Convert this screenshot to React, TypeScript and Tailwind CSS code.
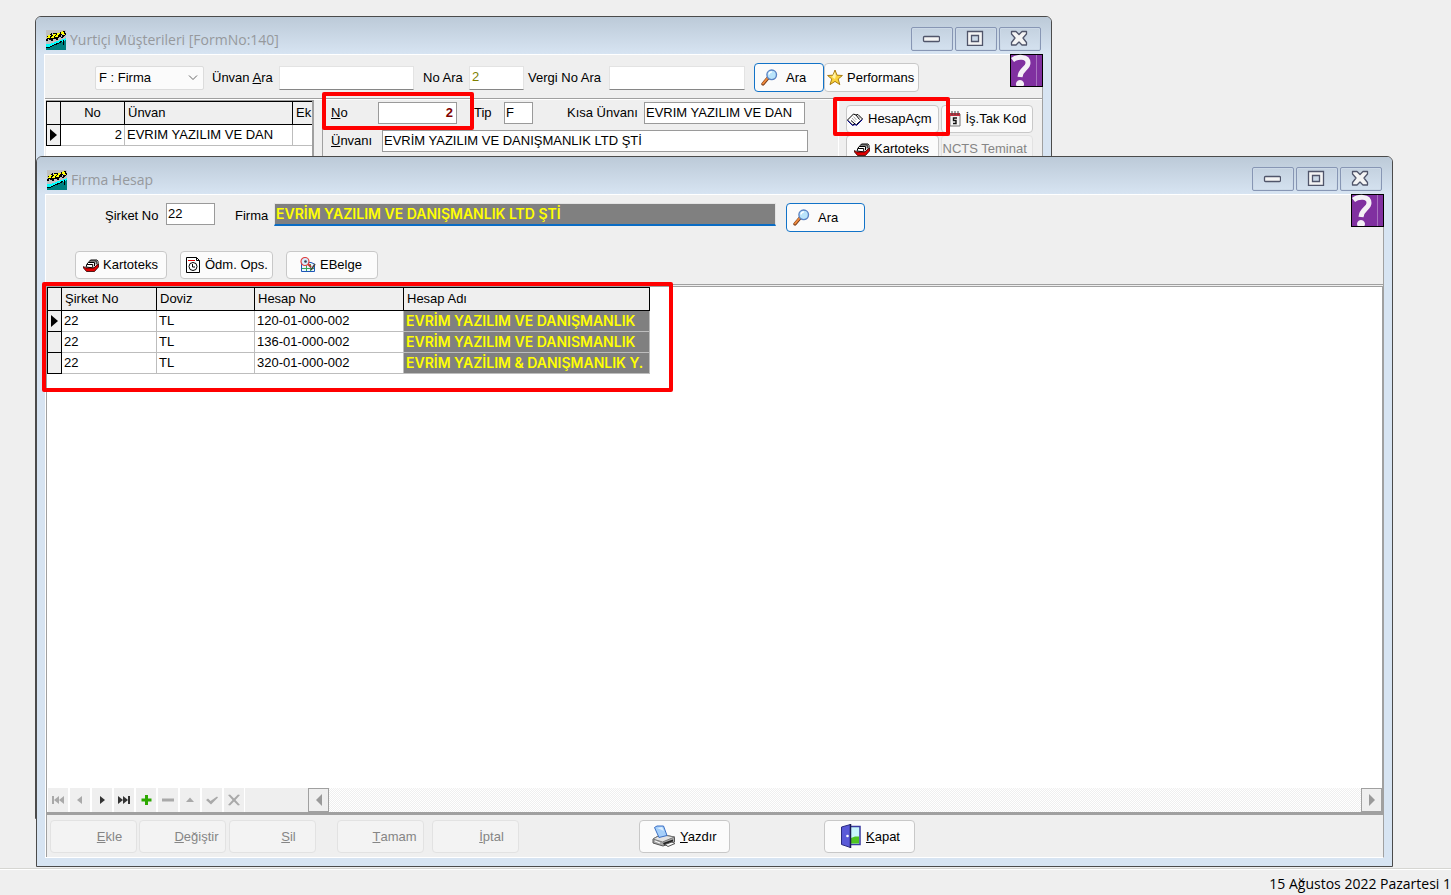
import type { ReactNode } from "react"

const accounts = [
  { firm: "22", currency: "TL", no: "120-01-000-002", name: "EVRİM YAZILIM VE DANIŞMANLIK" },
  { firm: "22", currency: "TL", no: "136-01-000-002", name: "EVRİM YAZILIM VE DANISMANLIK" },
  { firm: "22", currency: "TL", no: "320-01-000-002", name: "EVRİM YAZİLIM & DANIŞMANLIK Y." },
]

function AppIcon() {
  return (
    <svg width="20" height="20" viewBox="0 0 20 20" shapeRendering="crispEdges" className="shrink-0">
      <rect width="20" height="20" fill="#c0c0c0" />
      <path d="M0 17L6 15L12 13L20 9V20H0z" fill="#008080" />
      <path d="M0 14H4L9 12L14 10L20 8V10L14 13L9 14L4 17L0 18z" fill="#00ffff" />
      <path d="M1 11L2 7L5 5L4 9L6 10L8 4L10 4L9 8L11 9L13 3M14 7L15 3L18 2L19 4L17 6L16 8" fill="none" stroke="#000" strokeWidth="2" />
      <path d="M2 8L4 5M6 8L9 4M10 7L13 3M15 4L17 2M17 5L18 4" fill="none" stroke="#ff0" strokeWidth="2" />
      <path d="M0 18L4 17L8 15L13 13L16 11M17 10V14H18" fill="none" stroke="#000" />
    </svg>
  )
}

function SearchIcon() {
  return (
    <svg width="17" height="17" viewBox="0 0 17 17" className="shrink-0">
      <path d="M2 15L7 9" stroke="#7a3f1c" strokeWidth="3.4" strokeLinecap="round" />
      <path d="M2 14.6L6.6 9.2" stroke="#f08a3c" strokeWidth="1.8" strokeLinecap="round" />
      <circle cx="10.7" cy="5.8" r="4.8" fill="#b9e4fb" stroke="#5b84c4" strokeWidth="1.4" />
      <path d="M8 5.5a3 3 0 0 1 3-2.6" stroke="#fff" strokeWidth="1.4" fill="none" />
    </svg>
  )
}

function StarIcon() {
  return (
    <svg width="16" height="17" viewBox="0 0 16 17" className="shrink-0">
      <path d="M8 1L10 6.2L15.4 6.5L11.2 10L12.8 15.6L8 12.4L3 15.6L4.8 10L.6 6.5L6 6.2z" fill="#fbd33c" stroke="#a87b12" strokeLinejoin="round" />
      <path d="M8 3L8.8 7L8 10L5 8z" fill="#fff3a8" />
    </svg>
  )
}

function BookIcon() {
  return (
    <svg width="16" height="15" viewBox="0 0 16 15" className="shrink-0">
      <path d="M.5 8L6.500 2L9 3L11 2.500L15.500 7L9.500 12.500L7.500 12L5.500 13z" fill="#fff" stroke="#000" />
      <path d="M.5 8.500L5.500 13.500L8 12.500L9.500 13.500L15.500 7.500" stroke="#000090" fill="none" />
      <path d="M9 3L12.500 7.500M4 8.500L8 12" stroke="#000" fill="none" />
      <path d="M6.500 4.500L9.500 8M5 6L8.500 10M11.500 4.500L13 6.500" stroke="#aaa" fill="none" />
    </svg>
  )
}

function CardsIcon() {
  return (
    <svg width="16" height="13" viewBox="0 0 16 13" className="shrink-0">
      <path d="M3 8L4 5L7.500 1H14L15 2.500V6L11 9z" fill="#fff" stroke="#000" />
      <path d="M5.500 3.500H11.500V7M7 2H13.200V5.500M4 5.500H9.700V8" fill="none" stroke="#000" />
      <path d="M.5 7.500L3 9H10.500L15.500 5V8L11.500 12.500H3.500L.5 9z" fill="#e00000" stroke="#300000" strokeWidth=".8" />
    </svg>
  )
}

function CalendarIcon() {
  return (
    <svg width="14" height="16" viewBox="0 0 14 16" className="shrink-0">
      <path d="M2 3H12V15H2z" fill="#f4f4f4" stroke="#777" />
      <path d="M2 2H12V5H2z" fill="#c03040" />
      <path d="M4 0V4M7 0V4M10 0V4" stroke="#444" />
      <path d="M9 7H5.5V9.5H8V12.5H5" stroke="#111" strokeWidth="1.4" fill="none" />
    </svg>
  )
}

function ClockPageIcon() {
  return (
    <svg width="14" height="16" viewBox="0 0 14 16" className="shrink-0">
      <path d="M.5 .5H10.5L13.5 3.5V15.5H.5z" fill="#fff" stroke="#000" />
      <path d="M2 3.5H9" stroke="#e00000" />
      <path d="M10.5 .5V3.5H13.5" stroke="#000" fill="none" />
      <circle cx="7" cy="9.5" r="4" fill="#fff" stroke="#000" />
      <path d="M6.500 7V10H9" stroke="#000" fill="none" />
    </svg>
  )
}

function DocumentSearchIcon() {
  return (
    <svg width="16" height="16" viewBox="0 0 16 16" className="shrink-0">
      <path d="M1.500 5.500H11L14.500 7V14.500H1.500z" fill="#e8f6ff" stroke="#1d57b8" />
      <path d="M2 11.500H14M6.500 7V14M10.500 7V14" stroke="#3aa05a" />
      <path d="M15 7L11 13" stroke="#444" strokeWidth="1.5" fill="none" />
      <path d="M8 7L11 10" stroke="#b33" strokeWidth="2" />
      <circle cx="5" cy="4.5" r="4" fill="#d5ecff" stroke="#e04040" strokeWidth="1.2" />
      <circle cx="5.5" cy="4.5" r="1.3" fill="#345" />
    </svg>
  )
}

function PrinterIcon() {
  return (
    <svg width="24" height="23" viewBox="0 0 24 23" className="shrink-0">
      <path d="M1 14L9 9.500L22.500 12V17L11 21L1 18z" fill="#a8a8a8" stroke="#555" />
      <path d="M1 14L9 9.500L22.500 12L10.500 17z" fill="#e2e2e2" stroke="#777" />
      <path d="M2.500 2.500L5 1H11.500L15 10.500L7 12.500z" fill="#a5cffa" stroke="#3b6fc4" />
      <path d="M5 3L10 2L12 6z" fill="#dcefff" />
      <path d="M11 18L21 14.500V16.500L12 20z" fill="#222" />
      <path d="M13 19.500L20 17L23 18.500L16 21.500z" fill="#f8f8f8" stroke="#555" />
      <path d="M3 16L8 18" stroke="#fff" />
    </svg>
  )
}

function DoorIcon() {
  return (
    <svg width="20" height="24" viewBox="0 0 20 24" className="shrink-0">
      <path d="M9 2.5H19V20.5H9z" fill="#c8f6fb" stroke="#3a3aa0" strokeWidth="1.5" />
      <path d="M10 14L14 12.500H18V19.500H10z" fill="#4fc41e" />
      <path d="M.5 3L9.5 .5V23.5L.5 20.5z" fill="#5a5ad8" stroke="#2a2a80" />
      <path d="M9.5 0V24" stroke="#1b1b50" strokeWidth="1.5" />
      <circle cx="6.5" cy="12" r="1.3" fill="#fff" />
    </svg>
  )
}

function HelpButton() {
  return (
    <button aria-label="Yardım" className="z-10 -mt-px -mr-px shrink-0 self-start">
      <svg width="33" height="33" viewBox="0 0 33 33">
        <rect x=".5" y=".5" width="32" height="32" fill="#8030a0" stroke="#000" />
        <path d="M26.5 1V32" stroke="#a873c0" />
        <path d="M2.500 6C7 2.500 18 1.500 18 9C18 14.500 10.500 15 10 23" fill="none" stroke="#f4f0f6" strokeWidth="5" />
        <path d="M6.500 32A4 4 0 1 1 13.500 32z" fill="#f4f0f6" />
      </svg>
    </button>
  )
}

function CaptionButton({ label, children }: { label: string; children: ReactNode }) {
  return (
    <button aria-label={label} className="flex h-6 w-[42px] items-center justify-center rounded-xs border border-[#8796b4] pr-[2px] pb-[2px] shadow-[inset_0_0_0_1px_#ccd9e7]">
      <svg width="18" height="16" viewBox="0 0 18 16" fill="#f4f4f4" stroke="#50556a" strokeWidth="1.3">
        {children}
      </svg>
    </button>
  )
}

function TitleBar({ title }: { title: string }) {
  return (
    <div className="flex h-[37px] shrink-0 items-center bg-linear-to-b from-[#bccad8] to-[#d7e4f2] px-[10px] pt-2">
      <AppIcon />
      <h1 className="ml-1 flex-1 font-['Open_Sans',sans-serif] text-[14px] text-[#96999d]">{title}</h1>
      <div className="flex gap-[2px] pb-[2px]">
        <CaptionButton label="Simge durumuna küçült">
          <rect x="1.500" y="6.500" width="16" height="5" rx="1" />
        </CaptionButton>
        <CaptionButton label="Ekranı kapla">
          <path fillRule="evenodd" d="M1.500 1.500H16.500V15.300H1.500zM5.500 5.500V11.500H12.500V5.500z" />
        </CaptionButton>
        <CaptionButton label="Kapat">
          <path d="M1.500 1.500H6L9 4.500L12 1.500H16.500V4L13 8L16.500 12.500V15H12L9 12L6 15H1.500V12.500L5 8L1.500 4z" strokeLinejoin="round" />
        </CaptionButton>
      </div>
    </div>
  )
}

function Button({ className = "", disabled, children }: { className?: string; disabled?: boolean; children: ReactNode }) {
  return (
    <button
      disabled={disabled}
      className={"flex shrink-0 items-center rounded border border-[#c8c8c8] bg-[#fbfbfb] whitespace-nowrap disabled:border-[#e2e2e2] disabled:bg-[#f3f3f3] disabled:text-[#858585] " + className}
    >
      {children}
    </button>
  )
}

const headCell = "border-y border-r border-black bg-[#efefef] px-[3px] text-left font-normal whitespace-nowrap"
const bodyCell = "border-r border-b border-[#bdbdbd] px-[2px] whitespace-nowrap overflow-hidden"
const rowMark = "border-x border-b border-black bg-[#efefef]"
const sunken = "border border-[#9a9a9a] bg-white px-[1px] pb-[1px] outline-none"
const flat = "h-6 border border-[#e3e3e3] border-b-[#868686] bg-white px-[2px] pb-[2px] outline-none"

function Marker() {
  return (
    <svg width="7" height="12" viewBox="0 0 7 12" className="ml-[3px]">
      <path d="M0 0L7 6L0 12z" />
    </svg>
  )
}

function CustomersWindow() {
  return (
    <section className="absolute top-4 left-[35px] flex h-[803px] w-[1017px] flex-col overflow-hidden rounded-t-md border border-[#4b4b4b] bg-[#d7e4f2]">
      <TitleBar title="Yurtiçi Müşterileri [FormNo:140]" />
      <div className="mx-2 mb-2 flex flex-1 flex-col border-t border-r border-l border-t-white border-r-[#a0a0a0] border-l-white bg-[#efefef]">
        <div className="flex h-11 shrink-0 border-b border-[#a0a0a0] pl-[50px]">
          <div className="flex flex-1 items-center pt-[2px]">
            <select aria-label="Tür" className="mr-2 h-6 w-[109px] appearance-none rounded-xs border border-[#dcdcdc] bg-[#fbfbfb] px-[3px]">
              <option>F : Firma</option>
            </select>
            <svg width="10" height="6" viewBox="0 0 10 6" className="pointer-events-none mr-[14px] -ml-6 shrink-0">
              <path d="M1 .5L5 4.500L9 .5" fill="none" stroke="#666" />
            </svg>
            <label htmlFor="unvanAra" className="w-[67px]">Ünvan <u>A</u>ra</label>
            <input id="unvanAra" className={flat + " w-[135px]"} />
            <label htmlFor="noAra" className="ml-[9px] w-[46px]">No Ara</label>
            <input id="noAra" defaultValue="2" className={flat + " w-[55px] text-[#808000]"} />
            <label htmlFor="vergiAra" className="ml-1 w-[81px]">Vergi No Ara</label>
            <input id="vergiAra" className={flat + " w-[136px]"} />
            <Button className="ml-[9px] h-[29px] w-[70px] gap-2 border-[#1273c8]! pl-[6px]"><SearchIcon />Ara</Button>
            <Button className="h-[29px] w-[95px] gap-1 pl-[2px]"><StarIcon />Performans</Button>
          </div>
          <HelpButton />
        </div>
        <div className="flex flex-1 border-t border-white">
          <div className="ml-px w-[268px] shrink-0 overflow-hidden border-t border-r-2 border-[#a0a0a0] bg-white">
            <table className="w-[300px] table-fixed border-separate border-spacing-0">
              <colgroup>
                <col className="w-[15px]" /><col className="w-16" /><col className="w-[168px]" /><col />
              </colgroup>
              <thead>
                <tr className="h-6">
                  <th className={headCell + " border-l"}></th>
                  <th className={headCell + " text-center!"}>No</th>
                  <th className={headCell}>Ünvan</th>
                  <th className={headCell}>Ek</th>
                </tr>
              </thead>
              <tbody>
                <tr className="h-[21px]">
                  <td className={rowMark}><Marker /></td>
                  <td className={bodyCell + " text-right"}>2</td>
                  <td className={bodyCell}>EVRIM YAZILIM VE DAN</td>
                  <td className={bodyCell}></td>
                </tr>
              </tbody>
            </table>
          </div>
          <div className="ml-2 flex flex-1 flex-col gap-[6px] border-l border-[#a0a0a0] pt-[2px] pl-2">
            <div className="flex items-center">
              <label htmlFor="no" className="w-[47px]"><u>N</u>o</label>
              <input id="no" defaultValue="2" className={sunken + " h-[22px] w-[79px] pr-[3px]! text-right font-bold text-[#800000]"} />
              <label htmlFor="tip" className="ml-[17px] w-[30px]">Tip</label>
              <input id="tip" defaultValue="F" className={sunken + " h-[22px] w-[29px]"} />
              <label htmlFor="kisa" className="ml-[34px] w-[77px]">Kısa Ünvanı</label>
              <input id="kisa" defaultValue="EVRIM YAZILIM VE DAN" className={sunken + " h-[22px] w-[161px]"} />
            </div>
            <div className="flex items-center">
              <label htmlFor="unvan" className="w-[51px]"><u>Ü</u>nvanı</label>
              <input id="unvan" defaultValue="EVRİM YAZILIM VE DANIŞMANLIK LTD ŞTİ" className={sunken + " h-[22px] w-[426px]"} />
            </div>
          </div>
          <div className="grid w-[204px] shrink-0 grid-cols-2 content-start gap-[2px] border-l border-white pt-[5px] pr-[9px] pl-[7px]">
            <Button className="h-7 gap-[5px]"><BookIcon />HesapAçm</Button>
            <Button className="h-7 gap-1 pl-[6px]"><CalendarIcon />İş.Tak Kod</Button>
            <Button className="h-7 gap-1 pl-[7px]"><CardsIcon />Kartoteks</Button>
            <Button disabled className="h-7 pl-[1px]">NCTS Teminat</Button>
          </div>
        </div>
      </div>
    </section>
  )
}

const navButtons = [
  { label: "İlk", color: "#a9a9a9", d: "M1 2V10H3V2zM8 2L3 6L8 10zM13 2L8 6L13 10z" },
  { label: "Önceki", color: "#a9a9a9", d: "M9 2L4 6L9 10z" },
  { label: "Sonraki", color: "#333", d: "M5 2L10 6L5 10z" },
  { label: "Son", color: "#333", d: "M1 2L6 6L1 10zM6 2L11 6L6 10zM11 2H13V10H11z" },
  { label: "Kayıt ekle", color: "#2ca800", d: "M6 1H9V4.500H12.500V7.500H9V11H6V7.500H2.500V4.500H6z" },
  { label: "Kayıt sil", color: "#a9a9a9", d: "M1 4.500H13V7.500H1z" },
  { label: "Düzenle", color: "#a9a9a9", d: "M3 8L7 3.500L11 8z" },
  { label: "Kaydet", color: "#a9a9a9", d: "M1 6L3 4.500L5.500 7L12 2.500L13 3.500L6 10.500z" },
  { label: "Vazgeç", color: "#a9a9a9", d: "M1 1L3 .5L7 4.500L11 .5L13 1L8.500 6L13 11L11 11.500L7 7.500L3 11.500L1 11L5.500 6z" },
]

function AccountsGrid() {
  return (
    <div className="flex flex-1 flex-col border-x border-t border-[#a0a0a0] bg-white">
      <div className="flex-1">
        <table className="w-[603px] table-fixed border-separate border-spacing-0">
          <colgroup>
            <col className="w-[15px]" /><col className="w-[95px]" /><col className="w-[98px]" /><col className="w-[149px]" /><col />
          </colgroup>
          <thead>
            <tr className="h-6">
              <th className={headCell + " border-l"}></th>
              <th className={headCell}>Şirket No</th>
              <th className={headCell}>Doviz</th>
              <th className={headCell}>Hesap No</th>
              <th className={headCell}>Hesap Adı</th>
            </tr>
          </thead>
          <tbody>
            {accounts.map((a, i) => (
              <tr key={a.no} className="h-[21px]">
                <td className={rowMark}>{i === 0 && <Marker />}</td>
                <td className={bodyCell}>{a.firm}</td>
                <td className={bodyCell}>{a.currency}</td>
                <td className={bodyCell}>{a.no}</td>
                <td className={bodyCell + " bg-[#808080] font-['Inter',sans-serif] text-[14px] leading-4 font-semibold text-[#ff0]"}>{a.name}</td>
              </tr>
            ))}
          </tbody>
        </table>
      </div>
      <div className="flex h-6 shrink-0">
        <div className="flex w-[261px] bg-[#efefef]">
          <div className="flex gap-[2px] bg-white px-[1px]">
            {navButtons.map((b) => (
              <button key={b.label} aria-label={b.label} className="flex w-5 items-center justify-center bg-[#efefef]">
                <svg width="14" height="12" viewBox="0 0 14 12" fill={b.color}>
                  <path d={b.d} />
                </svg>
              </button>
            ))}
          </div>
        </div>
        <button aria-label="Sola kaydır" className="flex w-[21px] items-center justify-center border border-[#a0a0a0] bg-[#efefef]">
          <svg width="6" height="12" viewBox="0 0 6 12" fill="#9a9a9a"><path d="M6 0V12L0 6z" /></svg>
        </button>
        <div className="flex-1 bg-[repeating-conic-gradient(#fff_0_25%,#efefef_0_50%)] bg-size-[2px_2px]"></div>
        <button aria-label="Sağa kaydır" className="flex w-[21px] items-center justify-center border border-[#a0a0a0] bg-[#efefef]">
          <svg width="6" height="12" viewBox="0 0 6 12" fill="#9a9a9a"><path d="M0 0V12L6 6z" /></svg>
        </button>
      </div>
    </div>
  )
}

function AccountWindow() {
  return (
    <section className="absolute top-[156px] left-9 flex h-[711px] w-[1357px] flex-col overflow-hidden rounded-t-md border border-[#4b4b4b] bg-[#d7e4f2]">
      <TitleBar title="Firma Hesap" />
      <div className="mx-2 mb-2 flex flex-1 flex-col border border-white border-r-[#a0a0a0] bg-[#efefef]">
        <div className="flex">
          <div className="flex flex-1 flex-col gap-[19px] pt-2 pb-[5px]">
            <div className="flex pl-[59px]">
              <label htmlFor="sirket" className="w-[61px] pt-[5px]">Şirket No</label>
              <input id="sirket" defaultValue="22" className={sunken + " h-[22px] w-[49px]"} />
              <label htmlFor="firma" className="ml-5 w-[39px] pt-[5px]">Firma</label>
              <input
                id="firma"
                defaultValue="EVRİM YAZILIM VE DANIŞMANLIK LTD ŞTİ"
                className="h-[23px] w-[502px] border border-b-2 border-[#e3e3e3] border-b-[#0a6cc4] bg-[#808080] px-[1px] pb-[2px] font-['Inter',sans-serif] text-[14px] font-semibold text-[#ff0] outline-none"
              />
              <Button className="ml-[10px] h-[29px] w-[79px] gap-2 border-[#1273c8]! pl-[6px]"><SearchIcon />Ara</Button>
            </div>
            <div className="flex gap-[13px] pl-[29px]">
              <Button className="h-7 w-[92px] gap-1 pl-[7px]"><CardsIcon />Kartoteks</Button>
              <Button className="h-7 w-[93px] gap-[5px] pl-[5px]"><ClockPageIcon />Ödm. Ops.</Button>
              <Button className="h-7 w-[92px] gap-1 pl-[13px]"><DocumentSearchIcon />EBelge</Button>
            </div>
          </div>
          <HelpButton />
        </div>
        <div className="flex flex-1 flex-col border-t border-b-3 border-[#a0a0a0] pt-[1px]">
          <AccountsGrid />
        </div>
        <div className="flex h-[42px] shrink-0 items-center border-l border-[#a0a0a0] pl-[3px]">
          <Button disabled className="h-[33px] w-[87px] justify-center pt-[2px] pl-8"><u>E</u>kle</Button>
          <Button disabled className="ml-[2px] h-[33px] w-[87px] justify-center pt-[2px] pl-7"><u>D</u>eğiştir</Button>
          <Button disabled className="ml-[3px] h-[33px] w-[87px] justify-center pt-[2px] pl-8"><u>S</u>il</Button>
          <Button disabled className="ml-[21px] h-[33px] w-[87px] justify-center pt-[2px] pl-7"><u>T</u>amam</Button>
          <Button disabled className="ml-2 h-[33px] w-[87px] justify-center pt-[2px] pl-8"><u>İ</u>ptal</Button>
          <Button className="ml-[120px] h-[33px] w-[91px] pl-3"><PrinterIcon /><span className="ml-1 pt-[2px]"><u>Y</u>azdır</span></Button>
          <Button className="ml-[94px] h-[33px] w-[91px] pl-4"><DoorIcon /><span className="ml-[5px] pt-[2px]"><u>K</u>apat</span></Button>
        </div>
      </div>
    </section>
  )
}

const highlight = "pointer-events-none absolute rounded-xs border-4 border-[#f00]"

export default function App() {
  return (
    <div className="flex h-screen flex-col overflow-hidden bg-[#efefef] font-['Liberation_Sans',Arial,sans-serif] text-[13px] leading-4 text-black">
      <main className="relative flex-1">
        <CustomersWindow />
        <div className={highlight + " top-[92px] left-[322px] h-[38px] w-[152px]"}></div>
        <div className={highlight + " top-[97px] left-[833px] h-[39px] w-[117px]"}></div>
        <AccountWindow />
        <div className={highlight + " top-[282px] left-[42px] h-[110px] w-[631px]"}></div>
      </main>
      <footer className="flex h-[27px] shrink-0 items-center justify-end border-t border-[#d6d6d2] shadow-[inset_0_1px_0_#fff]">
        <span className="pt-1 font-['Open_Sans',sans-serif] text-[14px] leading-5 whitespace-nowrap">15 Ağustos 2022 Pazartesi 1</span>
      </footer>
    </div>
  )
}
